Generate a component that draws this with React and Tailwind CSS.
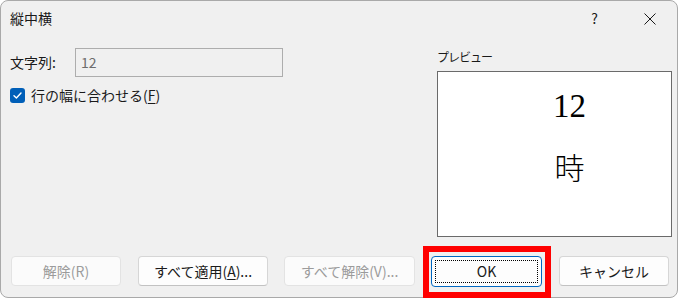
import React from "react";

const font = { fontFamily: '"Noto Sans CJK JP", "Noto Sans", sans-serif' };

function Btn({ children, disabled, className = "" }) {
  return (
    <div
      className={
        "h-[30px] flex items-center justify-center rounded-[4px] border text-[14px] " +
        (disabled
          ? "bg-[#fbfbfb] border-[#e3e3e3] text-[#9b9b9b] "
          : "bg-[#fdfdfd] border-[#d6d6d6] border-b-[#c2c2c2] text-[#1a1a1a] ") +
        className
      }
    >
      {children}
    </div>
  );
}

export default function App() {
  return (
    <div className="w-[681px] h-[299px] bg-white relative" style={font}>
      <div className="w-[678px] h-[298px] rounded-[8px] border border-[#a9a9a9] bg-[#f0f0f0] flex flex-col overflow-hidden">
        {/* title bar */}
        <div className="h-[35px] flex items-center pl-[9px] text-[14px] text-[#1a1a1a]">
          <span>縦中横</span>
          <span className="ml-auto text-[14px] mr-[46px]">?</span>
          <svg width="12" height="12" viewBox="0 0 12 12" className="mr-[21px]">
            <path d="M0.5 0.5 L11.5 11.5 M11.5 0.5 L0.5 11.5" stroke="#1a1a1a" strokeWidth="1" />
          </svg>
        </div>
        {/* body */}
        <div className="flex pl-[9px] h-[202px]">
          <div className="flex flex-col w-[282px]">
            <div className="flex items-center mt-[12px] h-[29px]">
              <span className="text-[14px] text-[#1a1a1a] w-[65px]">文字列:</span>
              <div className="w-[208px] h-[29px] border border-[#adadad] bg-[#f0f0f0] flex items-center pl-[5px] text-[14px] text-[#6d6d6d]">
                12
              </div>
            </div>
            <div className="flex items-center mt-[10px] h-[16px]">
              <div className="w-[15px] h-[15px] rounded-[3px] bg-[#005fb8] flex items-center justify-center">
                <svg width="11" height="11" viewBox="0 0 11 11">
                  <path d="M2 5.8 L4.4 8 L9 3" stroke="white" strokeWidth="1.4" fill="none" strokeLinecap="round" strokeLinejoin="round" />
                </svg>
              </div>
              <span className="ml-[6px] text-[14px] text-[#1a1a1a]">
                行の幅に合わせる(<span className="underline underline-offset-2">F</span>)
              </span>
            </div>
          </div>
          <div className="ml-[145px] flex flex-col">
            <span className="mt-[12px] text-[12px] text-[#1a1a1a] leading-[18px] tracking-[-1px]">プレビュー</span>
            <div className="mt-[5px] w-[235px] h-[166px] border border-[#6a6a6a] bg-white flex flex-col items-center">
              <span
                className="mt-[16px] text-[33px] leading-[36px] text-black ml-[30px]"
                style={{ fontFamily: '"Liberation Serif", serif' }}
              >
                12
              </span>
              <span
                className="mt-[24px] text-[30px] leading-[36px] text-black ml-[30px] font-light"
                style={{ fontFamily: '"Noto Sans CJK JP", serif' }}
              >
                時
              </span>
            </div>
          </div>
        </div>
        {/* buttons */}
        <div className="flex mt-[18px] pl-[10px]">
          <Btn disabled className="w-[110px]">解除(R)</Btn>
          <Btn className="w-[130px] ml-[17px]">
            すべて適用(<span className="underline underline-offset-2">A</span>)...
          </Btn>
          <Btn disabled className="w-[131px] ml-[16px]">すべて解除(V)...</Btn>
          <div className="w-[111px] h-[31px] ml-[16px] rounded-[4px] border border-[#0067c0] bg-[#fdfdfd] p-[3px]">
            <div className="w-full h-full border border-dotted border-black flex items-center justify-center text-[14px] text-[#1a1a1a]">
              OK
            </div>
          </div>
          <Btn className="w-[110px] ml-[17px]">キャンセル</Btn>
        </div>
      </div>
      <div className="absolute left-[423px] top-[246px] w-[128px] h-[52px] border-[6px] border-[#ff0000]" />
    </div>
  );
}
